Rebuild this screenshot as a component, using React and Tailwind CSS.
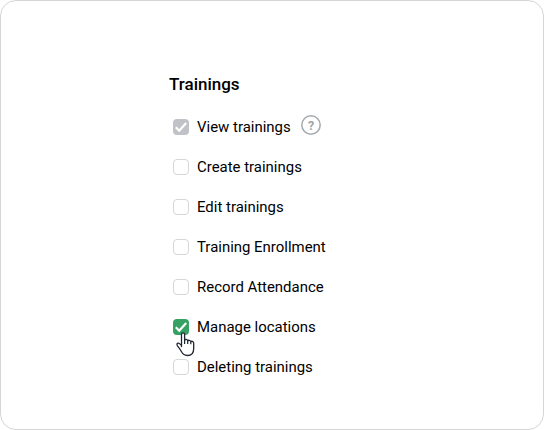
const permissions = [
  { label: "View trainings", state: "locked", help: true },
  { label: "Create trainings", state: "off" },
  { label: "Edit trainings", state: "off" },
  { label: "Training Enrollment", state: "off" },
  { label: "Record Attendance", state: "off" },
  { label: "Manage locations", state: "on", pointer: true },
  { label: "Deleting trainings", state: "off" },
];

const boxStyles = {
  off: "border border-[#d5d7d9] bg-white",
  locked: "bg-[#bfc3c7]",
  on: "bg-[#35a162]",
};

function HandPointer() {
  return (
    <svg className="absolute left-[3px] top-[13px] z-10" width="20" height="26" viewBox="0 0 20 26">
      <path
        d="M5.5 14.5V2.4a1.55 1.55 0 0 1 3.1 0v5.9c.3-1.3 3-1.2 3.1.6.4-1 2.9-.8 3.1.8.5-.8 2.9-.5 2.9 1.5v5.3c0 4.200-2.300 7-6.200 7-3.600 0-4.900-1.500-6.300-4.200-1.100-2.200-2.100-3.600-3.700-5.500-.9-1.200-.6-2.400.4-2.700 1.300-.3 2.400.9 3.600 2.300z"
        fill="white" stroke="#202532" strokeWidth="1.3" strokeLinejoin="round"
      />
      <path d="M8.6 8v4M11.7 8.700v3.300M14.800 9.500v2.700" stroke="#202532" strokeWidth="1.200" fill="none" />
    </svg>
  );
}

function Checkbox({ state, pointer }) {
  return (
    <span className={`relative block size-4 shrink-0 rounded-[4px] ${boxStyles[state]}`}>
      {state !== "off" && (
        <svg className="block" width="16" height="16" viewBox="0 0 16 16">
          <path d="M2.800 8.300 6.200 11.700 13.200 4" fill="none" stroke="white" strokeWidth="2.200" />
        </svg>
      )}
      {pointer && <HandPointer />}
    </span>
  );
}

function HelpIcon() {
  return (
    <svg className="mb-[4px] ml-[10px] shrink-0" width="20" height="20" viewBox="0 0 20 20">
      <circle cx="10" cy="10" r="9.2" fill="none" stroke="#a5a9ad" strokeWidth="1.5" />
      <text x="10" y="14.5" textAnchor="middle" className="fill-[#a0a4a8] text-[12.5px] font-bold">?</text>
    </svg>
  );
}

export default function App() {
  return (
    <main className="h-[430px] w-[544px] rounded-[16px] border border-[#d5d5d5] bg-white pl-[168px] pt-[73px] font-['Roboto',sans-serif] text-black">
      <h1 className="text-[17px] font-medium leading-[20px]">Trainings</h1>
      <ul className="mt-[13px] pl-[4px]">
        {permissions.map((p) => (
          <li key={p.label} className="flex h-10 items-center">
            <Checkbox state={p.state} pointer={p.pointer} />
            <span className="ml-2 text-[14.95px] leading-5">{p.label}</span>
            {p.help && <HelpIcon />}
          </li>
        ))}
      </ul>
    </main>
  );
}
